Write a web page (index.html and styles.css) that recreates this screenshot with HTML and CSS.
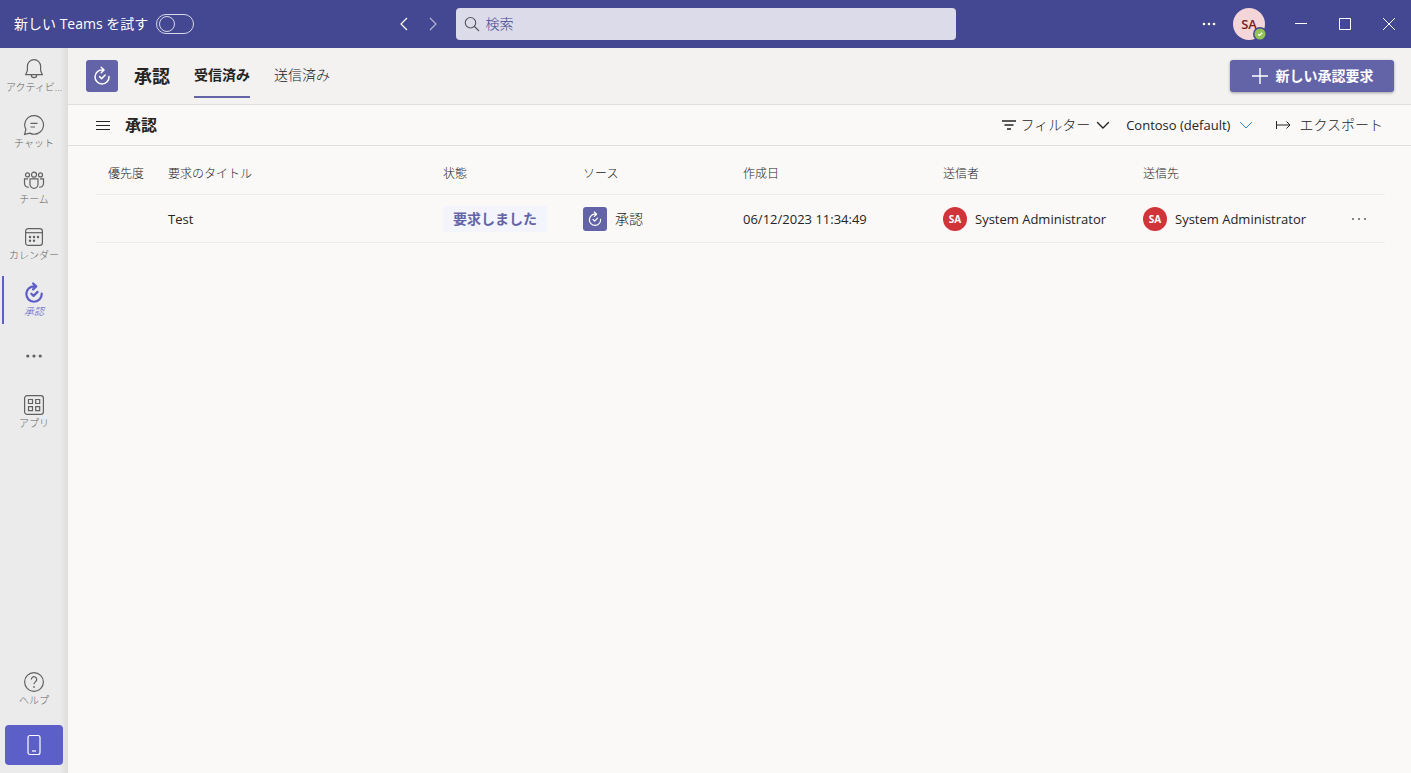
FILE: index.html
```html
<!DOCTYPE html>
<html lang="ja">
<head>
<meta charset="utf-8">
<title>承認</title>
<link rel="stylesheet" href="styles.css">
</head>
<body>
<svg class="defs" aria-hidden="true">
  <symbol id="approvals" viewBox="0 0 20 20">
    <path d="M10.800 4A7 7 0 1 0 17 10.500M9.200 1.300L12 4 9.200 6.700M7.600 10.600l2 2 3.600-3.600" fill="none" stroke="currentColor" stroke-linecap="round" stroke-linejoin="round"/>
  </symbol>
  <symbol id="chevron-down" viewBox="0 0 14 14">
    <path d="M1.500 4.500L7 10l5.500-5.500" fill="none" stroke="currentColor" stroke-linecap="round"/>
  </symbol>
</svg>
<div class="app">
  <header class="titlebar">
    <label class="try-new">新しい Teams を試す <input class="switch" type="checkbox" role="switch"></label>
    <div class="history">
      <button class="bare" aria-label="戻る"><svg width="14" height="14" viewBox="0 0 14 14"><path d="M10 1L4 7l6 6" fill="none" stroke="currentColor" stroke-width="1.200"/></svg></button>
      <button class="bare dim" aria-label="進む"><svg width="14" height="14" viewBox="0 0 14 14"><path d="M4 1l6 6-6 6" fill="none" stroke="currentColor" stroke-width="1.200"/></svg></button>
    </div>
    <label class="search">
      <svg width="16" height="16" viewBox="0 0 16 16"><path d="M6.500 1.500a5 5 0 1 0 0 10.500a5 5 0 0 0 0-10.500zM10.500 10.500L15 15" fill="none" stroke="#55545c" stroke-width="1.100"/></svg>
      <input type="search" placeholder="検索" aria-label="検索">
    </label>
    <div class="window-tools">
      <button class="bare more" aria-label="設定など"><svg width="14" height="4" viewBox="0 0 14 4" fill="currentColor"><circle cx="2" cy="2" r="1.300"/><circle cx="7" cy="2" r="1.300"/><circle cx="12" cy="2" r="1.300"/></svg></button>
      <button class="bare account" aria-label="アカウント">SA<svg class="presence" width="14" height="14" viewBox="0 0 14 14"><circle cx="7" cy="7" r="7" fill="#444791"/><circle cx="7" cy="7" r="5.500" fill="#92c353"/><path d="M5 7.200l1.400 1.300L9.200 5.800" fill="none" stroke="#fff" stroke-width="1.200"/></svg></button>
      <button class="bare win" aria-label="最小化"><svg width="12" height="12" viewBox="0 0 12 12"><path d="M0 5.500h12" stroke="currentColor"/></svg></button>
      <button class="bare win" aria-label="最大化"><svg width="12" height="12" viewBox="0 0 12 12"><path d="M.5.500h11v11H.500z" fill="none" stroke="currentColor"/></svg></button>
      <button class="bare win" aria-label="閉じる"><svg width="12" height="12" viewBox="0 0 12 12"><path d="M0 0l12 12M12 0L0 12" stroke="currentColor"/></svg></button>
    </div>
  </header>

  <nav class="rail" aria-label="アプリ バー">
    <button class="rail-item"><svg width="22" height="22" viewBox="0 0 22 22"><path d="M11 1.700a6.600 6.600 0 0 0-6.600 6.600v4.200L2.700 16.700h16.600l-1.700-4.200V8.300A6.600 6.600 0 0 0 11 1.700zM8.300 17a2.700 2.700 0 0 0 5.400 0"/></svg><span>アクティビ...</span></button>
    <button class="rail-item"><svg width="22" height="22" viewBox="0 0 22 22"><path d="M11.300 1.600a9.300 9.300 0 1 1-4.500 17.500L1.600 20.400l1.300-5A9.300 9.300 0 0 1 11.300 1.600zM7.500 9.300h7M7.500 13h4.500"/></svg><span>チャット</span></button>
    <button class="rail-item"><svg width="22" height="22" viewBox="0 0 22 22"><circle cx="11" cy="4.700" r="2.500"/><circle cx="4.500" cy="4.900" r="2"/><circle cx="17.500" cy="4.900" r="2"/><path d="M7 8.800h8v5.500a4 4 0 0 1-8 0zM5 8.800H1.500v4.700a3.700 3.700 0 0 0 4.300 3.700M17 8.800h3.500v4.700a3.700 3.700 0 0 1-4.300 3.700"/></svg><span>チーム</span></button>
    <button class="rail-item"><svg width="22" height="22" viewBox="0 0 22 22"><rect x="2.600" y="2.600" width="16.800" height="16.800" rx="2.600"/><path d="M2.600 6.700h16.800"/><g class="solid"><circle cx="7" cy="11" r="1.200"/><circle cx="11" cy="11" r="1.200"/><circle cx="15" cy="11" r="1.200"/><circle cx="7" cy="14.800" r="1.200"/><circle cx="11" cy="14.800" r="1.200"/></g></svg><span>カレンダー</span></button>
    <button class="rail-item active" aria-current="page"><svg class="heavy" width="22" height="22"><use href="#approvals"/></svg><span>承認</span></button>
    <button class="rail-item icon-only" aria-label="その他のアプリ"><svg width="22" height="22" viewBox="0 0 22 22"><g class="solid"><circle cx="4.800" cy="11" r="1.600"/><circle cx="11" cy="11" r="1.600"/><circle cx="17.200" cy="11" r="1.600"/></g></svg></button>
    <button class="rail-item"><svg width="22" height="22" viewBox="0 0 22 22"><rect x="1.600" y="1.600" width="18.800" height="18.800" rx="2.600"/><path d="M5.500 5.500h4v4h-4zM12.700 5.500h4v4h-4zM5.500 12.700h4v4h-4zM12.700 12.700h4v4h-4z"/></svg><span>アプリ</span></button>
    <button class="rail-item help"><svg width="22" height="22" viewBox="0 0 22 22"><circle cx="11" cy="11" r="9.400"/><path d="M8.300 8.500a2.700 2.700 0 1 1 4.300 2.100c-1 .8-1.600 1.300-1.600 2.700"/><circle class="solid" cx="11" cy="15.900" r=".9"/></svg><span>ヘルプ</span></button>
    <button class="mobile" aria-label="モバイル アプリ"><svg width="14" height="22" viewBox="0 0 14 22"><rect x="1" y="1.500" width="12" height="19" rx="2"/><path d="M5 17h4"/></svg></button>
  </nav>

  <main class="main">
    <header class="app-header">
      <span class="app-icon"><svg width="20" height="20"><use href="#approvals"/></svg></span>
      <h1>承認</h1>
      <nav class="tabs">
        <a class="tab selected" href="#received" aria-current="page">受信済み</a>
        <a class="tab" href="#sent">送信済み</a>
      </nav>
      <button class="primary"><svg width="18" height="18" viewBox="0 0 18 18"><path d="M9 1v16M1 9h16" stroke="currentColor" stroke-width="1.400"/></svg>新しい承認要求</button>
    </header>

    <div class="toolbar">
      <button class="bare menu" aria-label="メニュー"><svg width="14" height="11" viewBox="0 0 14 11"><path d="M0 1.500h14M0 5.500h14M0 9.500h14" stroke="currentColor"/></svg></button>
      <h2>承認</h2>
      <div class="actions">
        <button class="bare action"><svg width="14" height="10" viewBox="0 0 14 10"><path d="M0 1h14M2.500 5h9M5 9h4" stroke="currentColor" stroke-width="1.400"/></svg><span class="filter">フィルター</span><svg class="strong" width="14" height="14"><use href="#chevron-down"/></svg></button>
        <button class="bare action env">Contoso (default)<svg class="blue" width="14" height="14"><use href="#chevron-down"/></svg></button>
        <button class="bare action export"><svg width="16" height="10" viewBox="0 0 16 10"><path d="M1.500 1v8M1.500 5H15M11.500 1.500L15 5l-3.500 3.500" fill="none" stroke="currentColor"/></svg>エクスポート</button>
      </div>
    </div>

    <div class="table-wrap">
      <table class="requests">
        <colgroup><col class="c-priority"><col><col class="c-status"><col class="c-source"><col class="c-wide"><col class="c-wide"><col class="c-wide"><col class="c-more"></colgroup>
        <thead>
          <tr><th>優先度</th><th>要求のタイトル</th><th>状態</th><th>ソース</th><th>作成日</th><th>送信者</th><th>送信先</th><th></th></tr>
        </thead>
        <tbody>
          <tr>
            <td></td>
            <td>Test</td>
            <td><span class="status">要求しました</span></td>
            <td><span class="entity source"><span class="app-icon small"><svg width="16" height="16"><use href="#approvals"/></svg></span>承認</span></td>
            <td>06/12/2023 11:34:49</td>
            <td><span class="entity"><span class="avatar">SA</span>System Administrator</span></td>
            <td><span class="entity"><span class="avatar">SA</span>System Administrator</span></td>
            <td><button class="bare row-more" aria-label="その他のオプション"><svg width="16" height="4" viewBox="0 0 16 4" fill="currentColor"><circle cx="2" cy="2" r="1"/><circle cx="8" cy="2" r="1"/><circle cx="14" cy="2" r="1"/></svg></button></td>
          </tr>
        </tbody>
      </table>
    </div>
  </main>
</div>
</body>
</html>
```
FILE: styles.css
```css
* { box-sizing: border-box; }
body {
  margin: 0;
  font-family: "Open Sans", "Noto Sans CJK JP", sans-serif;
  font-size: 13px;
  line-height: 20px;
  color: #252423;
  background: #faf9f8;
}
h1, h2 { margin: 0; font-size: 18px; line-height: 24px; font-weight: 600; }
button, input { font: inherit; color: inherit; }
svg { display: block; flex: none; }
.defs { position: absolute; width: 0; height: 0; }
.bare { display: flex; align-items: center; justify-content: center; border: 0; padding: 0; background: none; }

.app {
  display: grid;
  grid-template: 48px 1fr / 68px 1fr;
  min-height: 100vh;
}

.titlebar {
  grid-column: 1 / -1;
  display: grid;
  grid-template-columns: 1fr 500px 1fr;
  grid-template-areas: "left search right";
  align-items: center;
  background: #444791;
  color: #fff;
}
.try-new, .history { grid-row: 1; grid-column: 1; }
.try-new { display: flex; align-items: center; gap: 8px; padding-left: 14px; justify-self: start; font-size: 14px; }
.switch {
  appearance: none;
  display: flex;
  align-items: center;
  width: 38px;
  height: 20px;
  margin: 0;
  padding: 0 2px;
  border: 1px solid #d8d8ea;
  border-radius: 10px;
}
.switch::before { content: ""; width: 14px; height: 14px; border: 1px solid #d8d8ea; border-radius: 50%; }
.history { display: flex; gap: 15px; justify-self: end; padding-right: 16px; }
.dim { opacity: .6; }
.search {
  grid-area: search;
  display: flex;
  align-items: center;
  gap: 6px;
  height: 32px;
  padding: 0 8px;
  border-radius: 4px;
  background: #dcdbe9;
}
.search input { flex: 1; min-width: 0; border: 0; padding: 0; background: none; outline: 0; font-size: 14px; font-weight: 300; }
.search input::placeholder { color: #444791; opacity: 1; }
.window-tools { grid-area: right; display: flex; align-items: center; justify-self: end; }
.more { margin-right: 17px; }
.account {
  position: relative;
  width: 32px;
  height: 32px;
  margin-right: 14px;
  border-radius: 50%;
  background: #f4d6d8;
  color: #751d1f;
  font-size: 13px;
  font-weight: 600;
}
.presence { position: absolute; right: -2px; bottom: -1px; }
.win { width: 44px; height: 48px; }

.rail {
  display: flex;
  flex-direction: column;
  padding-bottom: 8px;
  background: linear-gradient(90deg, #ebebeb 60px, #dddddd);
  color: #616161;
}
.rail-item {
  display: flex;
  flex-direction: column;
  align-items: center;
  width: 100%;
  height: 56px;
  padding: 10px 4px 0;
  border: 0;
  background: none;
  font-size: 10px;
  font-weight: 300;
  line-height: 14px;
}
.rail-item span { white-space: nowrap; }
.rail svg { fill: none; stroke: currentColor; stroke-width: 1.2; }
.rail .solid { fill: currentColor; stroke: none; }
.rail .heavy { stroke-width: 2; }
.active {
  background: linear-gradient(#5b5fc7, #5b5fc7) 2px 4px / 2px 48px no-repeat;
  color: #5b5fc7;
}
.active span { font-style: italic; }
.icon-only { justify-content: center; padding-top: 0; }
.help { margin-top: auto; }
.mobile {
  display: grid;
  place-items: center;
  height: 40px;
  margin: 8px 5px 0;
  border: 0;
  border-radius: 4px;
  background: #5b5fc7;
  color: #fff;
}

.main { min-width: 0; }
.app-header {
  display: flex;
  align-items: center;
  height: 57px;
  padding: 0 17px 0 18px;
  border-bottom: 1px solid #e1dfdd;
  background: #f3f2f1;
}
.app-icon {
  display: grid;
  place-items: center;
  width: 32px;
  height: 32px;
  border-radius: 3px;
  background: #6264a7;
  color: #fff;
  stroke-width: 1.5;
}
.small { width: 24px; height: 24px; }
.app-header h1 { margin-left: 16px; }
.tabs { display: flex; gap: 24px; margin-left: 24px; align-self: stretch; }
.tab {
  display: flex;
  align-items: center;
  margin-top: 6px;
  height: 44px;
  border-bottom: 2px solid transparent;
  font-size: 14px;
  font-weight: 300;
  color: #252423;
  text-decoration: none;
}
.selected { border-color: #6264a7; font-weight: 600; }
.primary {
  display: flex;
  align-items: center;
  justify-content: center;
  gap: 7px;
  min-width: 164px;
  height: 32px;
  margin-left: auto;
  border: 0;
  border-radius: 3px;
  background: #6264a7;
  box-shadow: 0 1px 3px rgba(0, 0, 0, .35);
  color: #fff;
  font-size: 14px;
  font-weight: 600;
}

.toolbar {
  display: flex;
  align-items: center;
  height: 41px;
  padding: 0 28px;
  border-bottom: 1px solid #e1dfdd;
}
.toolbar h2 { margin-left: 15px; font-size: 16px; }
.actions { display: flex; margin-left: auto; font-weight: 300; }
.action { gap: 4px; font-size: 14px; color: #252423; }
.filter { margin-right: 2px; }
.strong { stroke-width: 1.4; }
.env { gap: 9px; margin: 0 22px 0 16px; font-size: 13px; font-weight: 400; }
.export { gap: 8px; }
.blue { color: #2b88c8; }

.table-wrap { padding: 0 26px 0 28px; }
.requests { width: 100%; table-layout: fixed; border-collapse: collapse; }
.requests tr { height: 48px; }
.requests th, .requests td { padding: 2px 0 0; border-bottom: 1px solid #edebe9; text-align: left; }
.requests th { padding-top: 8px; font-size: 12px; font-weight: 300; }
.requests th:first-child { padding-left: 12px; }
.c-priority { width: 72px; }
.c-status { width: 140px; }
.c-source { width: 160px; }
.c-wide { width: 200px; }
.c-more { width: 42px; }
.status {
  display: inline-block;
  padding: 3px 10px;
  background: #f4f4fc;
  color: #6264a7;
  font-size: 14px;
  font-weight: 600;
}
.entity { display: flex; align-items: center; gap: 8px; }
.entity .app-icon { flex: none; }
.source { font-size: 14px; font-weight: 300; }
.avatar {
  display: grid;
  place-items: center;
  width: 24px;
  height: 24px;
  border-radius: 50%;
  background: #d13438;
  color: #fff;
  font-size: 10px;
  font-weight: 700;
}
.row-more { margin-left: 8px; color: #605e5c; }
```
